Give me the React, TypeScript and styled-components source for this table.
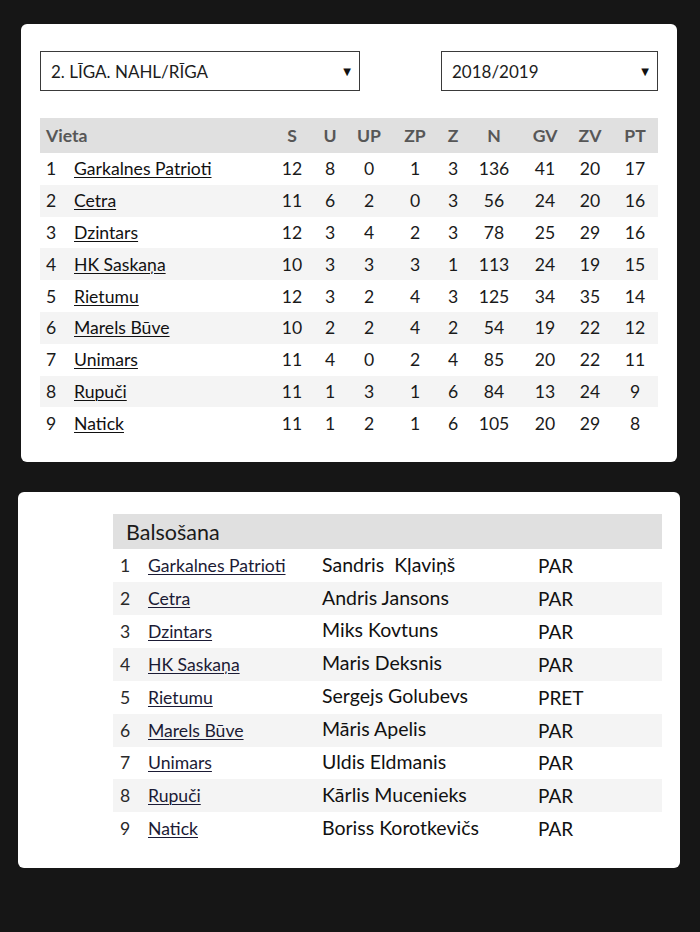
import React from "react";
import styled, { createGlobalStyle } from "styled-components";

const GlobalStyle = createGlobalStyle`
  html, body { margin: 0; padding: 0; background: #161616; }
  body { font-family: Lato, "Noto Sans", sans-serif; }
`;

const Page = styled.div`
  display: flex;
  flex-direction: column;
  align-items: flex-start;
  padding: 24px 0 64px;
  gap: 30px;
`;

const Card = styled.section<{ $left: number; $width: number; $pad: string }>`
  margin-left: ${(p) => p.$left}px;
  width: ${(p) => p.$width}px;
  box-sizing: border-box;
  background: #fff;
  border-radius: 6px;
  padding: ${(p) => p.$pad};
`;

const SelectRow = styled.div`
  display: flex;
  justify-content: space-between;
  margin-bottom: 27px;
`;

const SelectBox = styled.div<{ $width: number }>`
  width: ${(p) => p.$width}px;
  height: 40px;
  box-sizing: border-box;
  border: 1px solid #3a3a3a;
  display: flex;
  align-items: center;
  justify-content: space-between;
  padding: 0 8px 0 10px;
  font-size: 17px;
  color: #1c1c1c;
`;

const Arrow = styled.span`
  font-size: 10px;
  color: #111;
  font-family: "DejaVu Sans", sans-serif;
`;

const standingsCols = "34px 198px 40px 36px 42px 50px 26px 56px 46px 44px 46px";

const StandRow = styled.div<{ $head?: boolean; $alt?: boolean }>`
  display: grid;
  grid-template-columns: ${standingsCols};
  height: ${(p) => (p.$head ? 35 : 31.8)}px;
  align-items: center;
  background: ${(p) => (p.$head ? "#e0e0e0" : p.$alt ? "#f4f4f4" : "#fff")};
  color: ${(p) => (p.$head ? "#575757" : "#1a1a1a")};
  font-weight: ${(p) => (p.$head ? 700 : 400)};
  font-size: 17.6px;
`;

const Pos = styled.span`
  padding-left: 6px;
`;

const HeadLabel = styled.span`
  padding-left: 6px;
  grid-column: span 2;
`;

const Num = styled.span`
  text-align: center;
`;

const TeamLink = styled.a<{ $tone?: string }>`
  color: ${(p) => p.$tone || "#111"};
  text-decoration: underline;
  text-decoration-thickness: 1px;
  text-underline-offset: 2px;
  cursor: pointer;
`;

const voteCols = "35px 174px 216px 1fr";

const VoteTable = styled.div`
  display: flex;
  flex-direction: column;
`;

const VoteHead = styled.div`
  height: 35px;
  background: #e0e0e0;
  display: flex;
  align-items: center;
  padding-left: 13px;
  font-size: 21.5px;
  color: #1a1a1a;
`;

const VoteRow = styled.div<{ $alt?: boolean }>`
  display: grid;
  grid-template-columns: ${voteCols};
  height: 32.9px;
  align-items: center;
  background: ${(p) => (p.$alt ? "#f4f4f4" : "#fff")};
  font-size: 17.6px;
  color: #1a1a1a;
`;

const VotePos = styled.span`
  padding-left: 7px;
  color: #2a2a2a;
`;

const Voter = styled.span`
  font-size: 19.5px;
  color: #111;
  margin-top: -3px;
  white-space: pre;
`;

const Vote = styled.span`
  font-size: 19px;
  color: #111;
`;

const standings = [
  ["Garkalnes Patrioti", 12, 8, 0, 1, 3, 136, 41, 20, 17],
  ["Cetra", 11, 6, 2, 0, 3, 56, 24, 20, 16],
  ["Dzintars", 12, 3, 4, 2, 3, 78, 25, 29, 16],
  ["HK Saskaņa", 10, 3, 3, 3, 1, 113, 24, 19, 15],
  ["Rietumu", 12, 3, 2, 4, 3, 125, 34, 35, 14],
  ["Marels Būve", 10, 2, 2, 4, 2, 54, 19, 22, 12],
  ["Unimars", 11, 4, 0, 2, 4, 85, 20, 22, 11],
  ["Rupuči", 11, 1, 3, 1, 6, 84, 13, 24, 9],
  ["Natick", 11, 1, 2, 1, 6, 105, 20, 29, 8],
] as const;

const heads = ["S", "U", "UP", "ZP", "Z", "N", "GV", "ZV", "PT"];

const votes = [
  ["Garkalnes Patrioti", "Sandris  Kļaviņš", "PAR"],
  ["Cetra", "Andris Jansons", "PAR"],
  ["Dzintars", "Miks Kovtuns", "PAR"],
  ["HK Saskaņa", "Maris Deksnis", "PAR"],
  ["Rietumu", "Sergejs Golubevs", "PRET"],
  ["Marels Būve", "Māris Apelis", "PAR"],
  ["Unimars", "Uldis Eldmanis", "PAR"],
  ["Rupuči", "Kārlis Mucenieks", "PAR"],
  ["Natick", "Boriss Korotkevičs", "PAR"],
];

export default function App() {
  return (
    <>
      <GlobalStyle />
      <Page>
        <Card $left={21} $width={656} $pad="27px 19px 23px">
          <SelectRow>
            <SelectBox $width={320}>
              <span>2. LĪGA. NAHL/RĪGA</span>
              <Arrow>▼</Arrow>
            </SelectBox>
            <SelectBox $width={217}>
              <span>2018/2019</span>
              <Arrow>▼</Arrow>
            </SelectBox>
          </SelectRow>
          <div>
            <StandRow $head>
              <HeadLabel>Vieta</HeadLabel>
              {heads.map((h) => (
                <Num key={h}>{h}</Num>
              ))}
            </StandRow>
            {standings.map((r, i) => (
              <StandRow key={r[0]} $alt={i % 2 === 1}>
                <Pos>{i + 1}</Pos>
                <span>
                  <TeamLink>{r[0]}</TeamLink>
                </span>
                {r.slice(1).map((v, j) => (
                  <Num key={j}>{v}</Num>
                ))}
              </StandRow>
            ))}
          </div>
        </Card>
        <Card $left={18} $width={662} $pad="22px 18px 23px 95px">
          <VoteTable>
            <VoteHead>Balsošana</VoteHead>
            {votes.map((v, i) => (
              <VoteRow key={v[0]} $alt={i % 2 === 1}>
                <VotePos>{i + 1}</VotePos>
                <span>
                  <TeamLink $tone="#1b1b35">{v[0]}</TeamLink>
                </span>
                <Voter>{v[1]}</Voter>
                <Vote>{v[2]}</Vote>
              </VoteRow>
            ))}
          </VoteTable>
        </Card>
      </Page>
    </>
  );
}
